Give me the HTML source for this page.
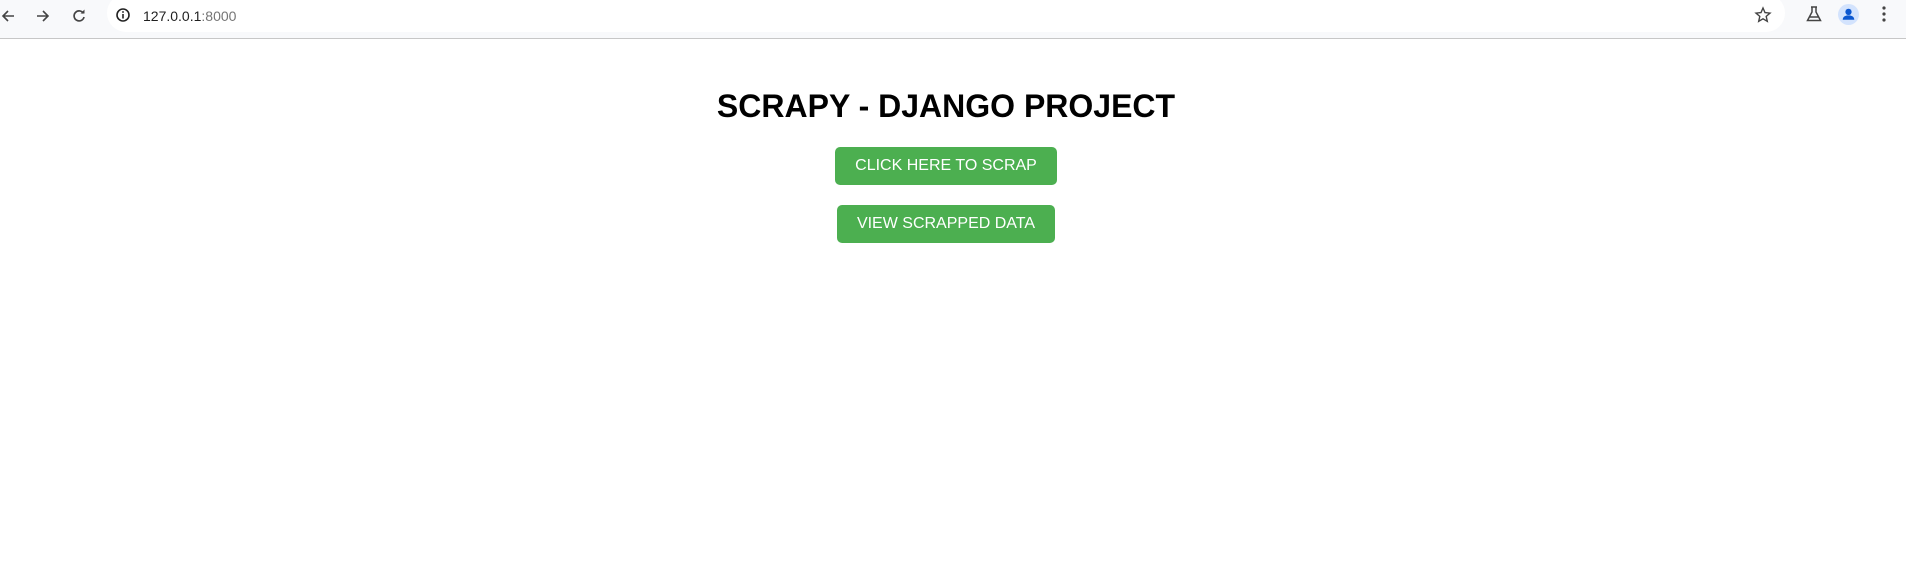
<!DOCTYPE html>
<html><head><style>
body{margin:0;width:1906px;height:580px;background:#fff;font-family:"Liberation Sans",Arial,sans-serif;position:relative;overflow:hidden}
.bar{position:absolute;left:0;top:0;width:1906px;height:38px;background:#f8f9fb;border-bottom:1px solid #c7c7c7}
.pill{position:absolute;left:107px;top:-6px;width:1678px;height:38px;background:#fff;border-radius:19px}
.url{position:absolute;left:143px;top:8px;font-size:14px;color:#1f1f1f}
.url span{color:#757575}
svg{position:absolute}
h1{position:absolute;left:0;width:1892px;top:88px;margin:0;text-align:center;font-size:32px;font-weight:bold;color:#000}
.btn{position:absolute;background:#4caf50;color:#fff;border-radius:5px;font-size:16px;text-align:center;line-height:38px;height:38px}
</style></head><body>
<div class="bar"><div class="pill"></div>
<svg style="left:0;top:8px" width="16" height="16" viewBox="0 0 16 16"><path d="M14 8H3M8 3L3 8l5 5" stroke="#444" stroke-width="1.6" fill="none"/></svg>
<svg style="left:35px;top:8px" width="16" height="16" viewBox="0 0 16 16"><path d="M2 8h11M8 3l5 5-5 5" stroke="#444" stroke-width="1.6" fill="none"/></svg>
<svg style="left:71px;top:8px" width="16" height="16" viewBox="0 0 16 16"><path d="M12.5 5.5A5 5 0 1 0 13 9" stroke="#444" stroke-width="1.7" fill="none"/><path d="M9.5 5.5h4v-4z" fill="#444"/></svg>
<svg style="left:115px;top:7px" width="16" height="16" viewBox="0 0 16 16"><circle cx="8" cy="8" r="6" stroke="#222" stroke-width="1.6" fill="none"/><rect x="7.2" y="7" width="1.6" height="4.5" fill="#222"/><rect x="7.2" y="4.2" width="1.6" height="1.6" fill="#222"/></svg>
<div class="url">127.0.0.1<span>:8000</span></div>
<svg style="left:1754px;top:6px" width="18" height="18" viewBox="0 0 18 18"><path d="M9 2l2 4.6 5 .5-3.8 3.3 1.1 4.9L9 12.8 4.7 15.3l1.1-4.9L2 7.1l5-.5z" stroke="#444" stroke-width="1.4" fill="none"/></svg>
<svg style="left:1805px;top:5px" width="18" height="18" viewBox="0 0 18 18"><path d="M6 2h6M7 2v5l-4.5 8.5h13L11 7V2M4.5 12h9" stroke="#444" stroke-width="1.5" fill="none"/></svg>
<svg style="left:1838px;top:4px" width="21" height="21" viewBox="0 0 20 20"><circle cx="10" cy="10" r="10" fill="#d3e3fd"/><circle cx="10" cy="7.5" r="3" fill="#0b57d0"/><path d="M4.5 15c0-3 2.5-4.2 5.5-4.2s5.5 1.2 5.5 4.2z" fill="#0b57d0"/></svg>
<svg style="left:1881px;top:5px" width="6" height="18" viewBox="0 0 6 18"><circle cx="3" cy="3" r="1.6" fill="#444"/><circle cx="3" cy="9" r="1.6" fill="#444"/><circle cx="3" cy="15" r="1.6" fill="#444"/></svg>
</div>
<h1>SCRAPY - DJANGO PROJECT</h1>
<div class="btn" style="left:835px;top:147px;width:222px">CLICK HERE TO SCRAP</div>
<div class="btn" style="left:837px;top:205px;width:218px">VIEW SCRAPPED DATA</div>
</body></html>
